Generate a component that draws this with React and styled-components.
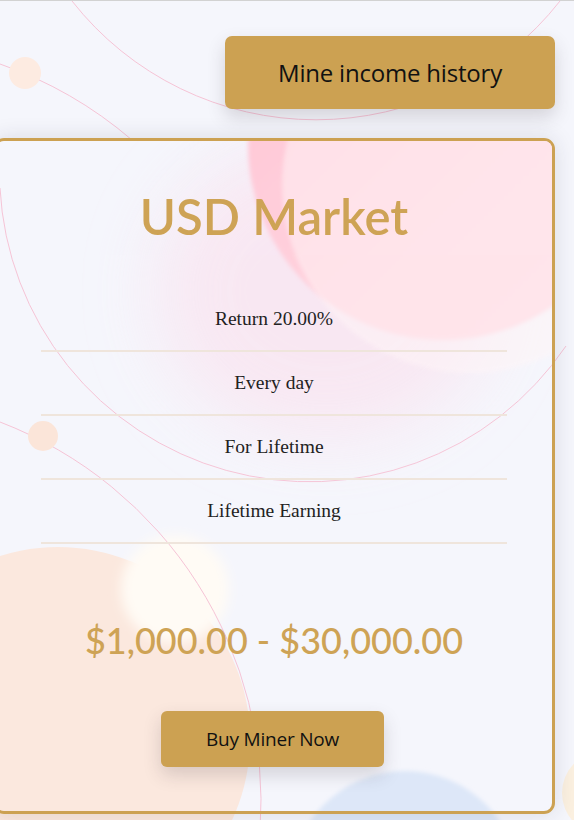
import React from 'react';
import styled, { createGlobalStyle } from 'styled-components';

const GlobalStyle = createGlobalStyle`
  html, body {
    margin: 0;
    padding: 0;
    background: #f5f6fc;
  }
`;

const rows = ['Return 20.00%', 'Every day', 'For Lifetime', 'Lifetime Earning'];

// decorative page drawing (bubbles and thin pink arcs)
const Backdrop = () => (
  <BackdropSvg width="574" height="820" viewBox="0 0 574 820">
    <defs>
      <filter id="blur8" x="-50%" y="-50%" width="200%" height="200%">
        <feGaussianBlur stdDeviation="6" />
      </filter>
      <filter id="blur2" x="-50%" y="-50%" width="200%" height="200%">
        <feGaussianBlur stdDeviation="2" />
      </filter>
    </defs>

    {/* peach / cream / blue bubbles at the bottom */}
    <circle cx="58" cy="738" r="192" fill="#fbe8de" />
    <circle cx="175" cy="588" r="54" fill="#fffbf5" filter="url(#blur8)" />
    <circle cx="405" cy="885" r="115" fill="#dde7f8" filter="url(#blur2)" />
    <circle cx="604" cy="792" r="42" fill="#fbf0e0" />

    {/* thin arcs */}
    <g fill="none" stroke="#f6c4d6" strokeWidth="1">
      <path d="M 72 0 A 310 310 0 0 0 560 0" />
      <path d="M 0 187 A 310 310 0 0 0 566 345" />
      <path d="M 0 63 A 410 410 0 0 1 132 139" />
      <path d="M 0 421 A 407 407 0 0 1 260 830" />
    </g>

    {/* small dots */}
    <circle cx="25" cy="72" r="16" fill="#fdebe1" />
    <circle cx="43" cy="435" r="15" fill="#fbe5d9" />
  </BackdropSvg>
);

// pink bubbles that sit inside the card, clipped by its border
const CardGlow = () => (
  <GlowSvg width="560" height="680" viewBox="0 0 560 680">
    <defs>
      <filter id="glowBlur" x="-50%" y="-50%" width="200%" height="200%">
        <feGaussianBlur stdDeviation="35" />
      </filter>
      <filter id="edgeBlur" x="-50%" y="-50%" width="200%" height="200%">
        <feGaussianBlur stdDeviation="2" />
      </filter>
      <linearGradient id="pinkFill" x1="0" y1="0" x2="1" y2="1">
        <stop offset="0" stopColor="#ffc4d4" />
        <stop offset="0.6" stopColor="#ffd3de" />
        <stop offset="1" stopColor="#ffd6e0" />
      </linearGradient>
    </defs>
    <ellipse cx="330" cy="150" rx="170" ry="150" fill="#f9e4f0" opacity="0.8" filter="url(#glowBlur)" />
    <circle cx="447" cy="4" r="195" fill="url(#pinkFill)" filter="url(#edgeBlur)" />
    <circle cx="474" cy="44" r="188" fill="#fff5f7" opacity="0.5" filter="url(#edgeBlur)" />
  </GlowSvg>
);

const App = () => {
  return (
    <Page>
      <GlobalStyle />
      <Backdrop />
      <Content>
        <TopBar>
          <GoldButton size="large">Mine income history</GoldButton>
        </TopBar>

        <Card>
          <CardGlow />
          <Title>USD Market</Title>
          <FeatureList>
            {rows.map((row) => (
              <FeatureRow key={row}>{row}</FeatureRow>
            ))}
          </FeatureList>
          <Price>$1,000.00 - $30,000.00</Price>
          <ButtonRow>
            <GoldButton size="small">Buy Miner Now</GoldButton>
          </ButtonRow>
        </Card>
      </Content>
    </Page>
  );
};

const Page = styled.div`
  position: relative;
  min-height: 820px;
  overflow: hidden;
  background: #f5f6fc;
  border-top: 1px solid #d2d2d2;
  box-sizing: border-box;
`;

const BackdropSvg = styled.svg`
  position: absolute;
  top: 0;
  left: 0;
  z-index: 0;
  pointer-events: none;
`;

const GlowSvg = styled.svg`
  position: absolute;
  top: 0;
  left: 0;
  z-index: -1;
  pointer-events: none;
`;

const Content = styled.div`
  position: relative;
  z-index: 1;
  display: flex;
  flex-direction: column;
`;

const TopBar = styled.div`
  display: flex;
  justify-content: flex-end;
  padding: 35px 19px 0 0;
`;

const GoldButton = styled.button`
  background: #cca152;
  color: #111;
  border: none;
  border-radius: ${(p) => (p.size === 'large' ? '7px' : '6px')};
  font-family: 'Open Sans', sans-serif;
  font-size: ${(p) => (p.size === 'large' ? '24px' : '19px')};
  width: ${(p) => (p.size === 'large' ? '330px' : '223px')};
  height: ${(p) => (p.size === 'large' ? '73px' : '56px')};
  box-shadow: 0 8px 18px rgba(60, 50, 60, 0.18);
  cursor: pointer;
  letter-spacing: -0.2px;
`;

const Card = styled.div`
  position: relative;
  isolation: isolate;
  overflow: hidden;
  margin: 29px 0 0 -7px;
  width: 562px;
  box-sizing: border-box;
  border: 3px solid #cca152;
  border-radius: 11px;
  box-shadow: 0 0 22px rgba(40, 40, 60, 0.13);
  padding: 40px 0 44px;
  display: flex;
  flex-direction: column;
  align-items: center;
`;

const Title = styled.h1`
  margin: 0;
  height: 70px;
  line-height: 70px;
  font-family: 'Lato', sans-serif;
  font-weight: 600;
  font-size: 49px;
  color: #cea355;
`;

const FeatureList = styled.div`
  margin-top: 37px;
  width: 466px;
  display: flex;
  flex-direction: column;
`;

const FeatureRow = styled.div`
  height: 62px;
  line-height: 62px;
  text-align: center;
  border-bottom: 2px solid #efe5dc;
  font-family: 'Liberation Serif', serif;
  font-size: 19.5px;
  color: #222;
`;

const Price = styled.div`
  margin-top: 71px;
  height: 50px;
  line-height: 50px;
  font-family: 'Lato', sans-serif;
  font-weight: 500;
  font-size: 36px;
  color: #cea355;
`;

const ButtonRow = styled.div`
  margin-top: 46px;
  display: flex;
  justify-content: center;
  margin-left: -3px;
`;

export default App;
